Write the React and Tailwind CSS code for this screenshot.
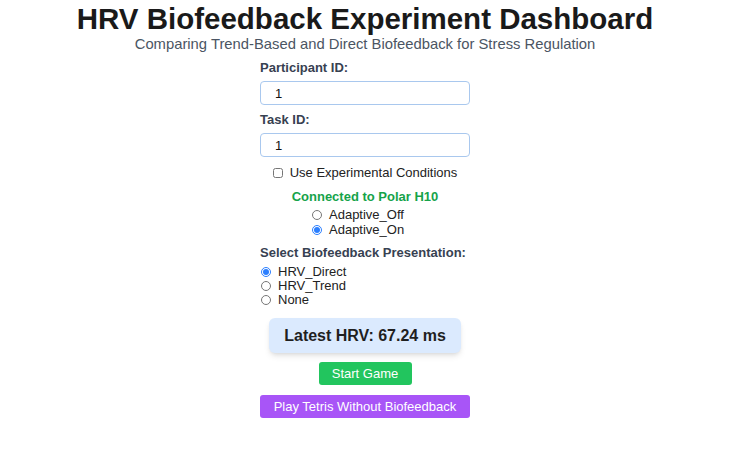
import React from 'react'

const font = { fontFamily: '"Liberation Sans", Arial, sans-serif' }

function Radio({ label, checked, name }) {
  return (
    <label className="flex h-[14px] items-center gap-[7px] text-[13px] leading-[14px] text-[#222]">
      <input
        type="radio"
        name={name}
        defaultChecked={checked}
        className="m-0 h-[10px] w-[10px] accent-blue-500"
      />
      <span>{label}</span>
    </label>
  )
}

export default function App() {
  return (
    <div className="min-h-[450px] w-[730px] bg-white pt-[2px] text-center" style={font}>
      <h1 className="text-[29.5px] font-bold leading-[34px] text-[#1a1a1a]">
        HRV Biofeedback Experiment Dashboard
      </h1>
      <p className="text-[14.8px] leading-[16px] text-[#4b5563]">
        Comparing Trend-Based and Direct Biofeedback for Stress Regulation
      </p>

      <div className="mx-auto w-[210px] text-left">
        <div className="mt-[8px] text-[13px] font-bold leading-[16px] text-[#374151]">Participant ID:</div>
        <input
          defaultValue="1"
          className="mt-[5px] box-border h-[24px] w-full rounded-[4px] border border-[#a9c8ee] px-[14px] text-[13px] text-[#111] outline-none"
        />
        <div className="mt-[7px] text-[13px] font-bold leading-[16px] text-[#374151]">Task ID:</div>
        <input
          defaultValue="1"
          className="mt-[5px] box-border h-[24px] w-full rounded-[4px] border border-[#a9c8ee] px-[14px] text-[13px] text-[#111] outline-none"
        />

        <label className="mt-[8px] flex h-[16px] items-center justify-center gap-[7px] text-[13px] leading-[16px] text-[#222]">
          <input type="checkbox" className="m-0 h-[10px] w-[10px]" />
          <span>Use Experimental Conditions</span>
        </label>

        <div className="mt-[8px] text-center text-[13px] font-bold leading-[16px] text-[#16a34a]">
          Connected to Polar H10
        </div>

        <div className="mt-[2px] ml-[52px] flex flex-col">
          <div className="h-[15px] flex items-center"><Radio name="adaptive" label="Adaptive_Off" /></div>
          <div className="h-[15px] flex items-center"><Radio name="adaptive" label="Adaptive_On" checked /></div>
        </div>

        <div className="mt-[8px] text-[13px] font-bold leading-[16px] text-[#374151]">
          Select Biofeedback Presentation:
        </div>
        <div className="mt-[4px] flex flex-col ml-[1px]">
          <Radio name="bf" label="HRV_Direct" checked />
          <Radio name="bf" label="HRV_Trend" />
          <Radio name="bf" label="None" />
        </div>

        <div className="mx-[9px] mt-[11px] flex h-[35px] items-center justify-center rounded-[6px] bg-[#dbeafe] text-[16px] font-bold text-[#1f1f1f] shadow-md">
          Latest HRV: 67.24 ms
        </div>

        <div className="mt-[9px] flex justify-center">
          <button className="h-[23px] w-[93px] rounded-[3px] bg-[#22c55e] text-[13px] text-white">
            Start Game
          </button>
        </div>

        <button className="mt-[10px] h-[23px] w-full rounded-[3px] bg-[#a855f7] text-[13px] text-white">
          Play Tetris Without Biofeedback
        </button>
      </div>
    </div>
  )
}
